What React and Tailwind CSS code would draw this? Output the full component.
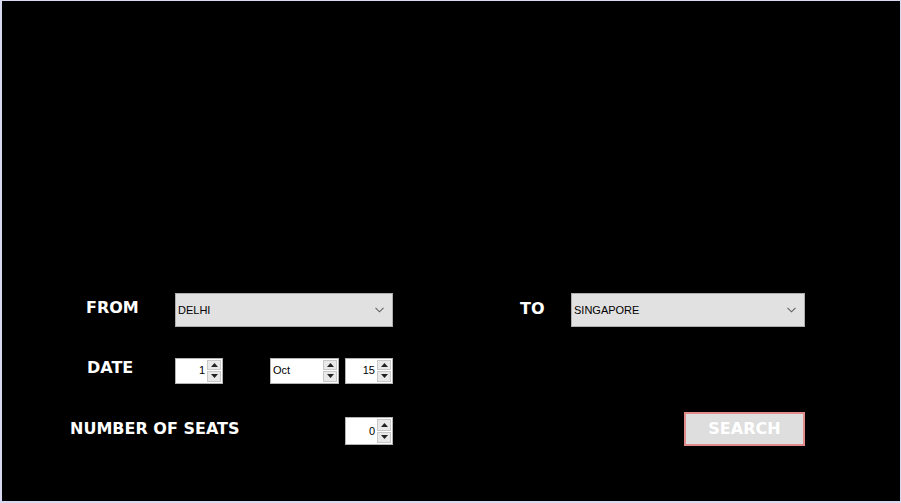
import React from "react";

const lbl = "text-white font-bold text-[16px] leading-none [font-family:'DejaVu_Sans',sans-serif]";
const small = "[font-family:'Liberation_Sans',sans-serif] text-[11px] text-black leading-none";

function Combo({ value, w }) {
  return (
    <div className={`${w} h-[34px] bg-[#e1e1e1] border border-[#adadad] flex items-center pl-[2px] pr-[8px] justify-between`}>
      <span className={small}>{value}</span>
      <svg width="9" height="6" viewBox="0 0 9 6">
        <path d="M0.5 0.8 L4.5 4.8 L8.5 0.8" fill="none" stroke="#606060" strokeWidth="1.1" />
      </svg>
    </div>
  );
}

function Spin({ value, w, left = false, h = "h-[26px]", extra = "" }) {
  return (
    <div className={`${w} ${h} ${extra} bg-white border border-[#b4b4b4] flex items-stretch`}>
      <div className={`flex-1 flex items-center ${left ? "justify-start pl-[2px]" : "justify-end pr-[2px]"}`}>
        <span className={small}>{value}</span>
      </div>
      <div className="w-[15px] flex flex-col gap-[1px] p-[1px] pl-0">
        <div className="flex-1 bg-[#e9e9e9] border border-[#c8c8c8] flex items-center justify-center">
          <svg width="7" height="4" viewBox="0 0 7 4"><path d="M0 4 L3.5 0 L7 4 Z" fill="#222" /></svg>
        </div>
        <div className="flex-1 bg-[#e9e9e9] border border-[#c8c8c8] flex items-center justify-center">
          <svg width="7" height="4" viewBox="0 0 7 4"><path d="M0 0 L3.5 4 L7 0 Z" fill="#222" /></svg>
        </div>
      </div>
    </div>
  );
}

export default function App() {
  return (
    <div className="w-[901px] h-[503px] bg-black border-l-2 border-t border-r border-b-2 border-[#d8d8f0] flex flex-col">
      <div className="h-[292px]" />
      {/* Row 1 */}
      <div className="flex items-center h-[34px]">
        <div className="w-[173px] pl-[84px] flex items-center mb-[5px]"><span className={lbl}>FROM</span></div>
        <Combo value="DELHI" w="w-[218px]" />
        <div className="w-[127px]" />
        <div className="w-[51px] mb-[5px]"><span className={lbl}>TO</span></div>
        <Combo value="SINGAPORE" w="w-[234px]" />
      </div>
      <div className="h-[30px]" />
      {/* Row 2 */}
      <div className="flex items-center h-[27px]">
        <div className="w-[173px] pl-[85px] flex items-center mb-[6px]"><span className={lbl}>DATE</span></div>
        <Spin value="1" w="w-[48px]" />
        <div className="w-[47px]" />
        <Spin value="Oct" w="w-[69px]" left />
        <div className="w-[6px]" />
        <Spin value="15" w="w-[48px]" />
      </div>
      <div className="h-[28px]" />
      {/* Row 3 */}
      <div className="flex items-center h-[34px]">
        <div className="w-[343px] pl-[68px] flex items-center"><span className={lbl}>NUMBER OF SEATS</span></div>
        <Spin value="0" w="w-[48px]" h="h-[28px]" extra="mt-[4px]" />
        <div className="w-[291px]" />
        <div className="w-[121px] h-[34px] bg-[#dedede] border-2 border-[#e08c8c] flex items-center justify-center">
          <span className="text-white font-bold text-[16px] leading-none [font-family:'DejaVu_Sans',sans-serif]">SEARCH</span>
        </div>
      </div>
    </div>
  );
}
